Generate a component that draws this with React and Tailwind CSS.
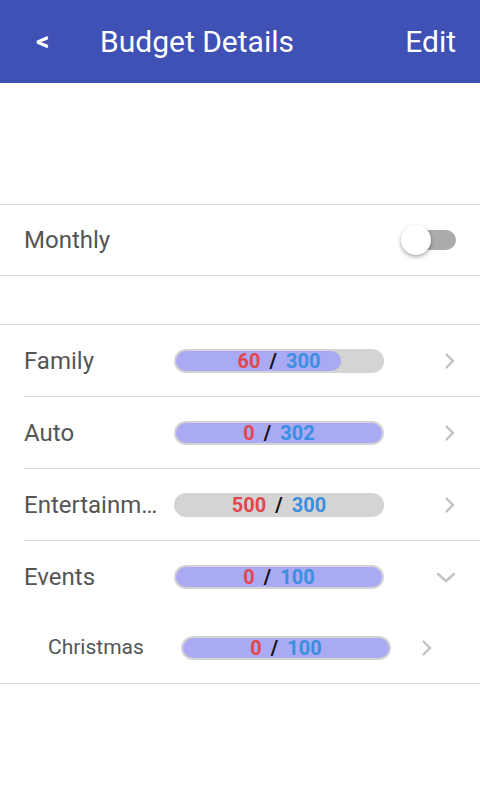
// App.jsx
const FONT = { fontFamily: "Roboto, 'Noto Sans', sans-serif" };

// ── Progress pill ─────────────────────────────────────────────
function Bar({ spent, total, fill }) {
  return (
    <div className="relative w-[210px] h-[24px] rounded-full bg-[#d4d4d4] p-[2px]">
      {fill > 0 && (
        <div className="h-full rounded-full bg-[#a9a9f4]" style={{ width: `${fill}%` }} />
      )}
      <div className="absolute inset-0 flex items-center justify-center gap-[9px] text-[20px] font-bold leading-none">
        <span className="text-[#e2474f]">{spent}</span>
        <span className="text-[#111]">/</span>
        <span className="text-[#3a8fe0]">{total}</span>
      </div>
    </div>
  );
}

function ChevronRight() {
  return (
    <svg width="12" height="18" viewBox="0 0 12 18" fill="none">
      <path d="M2.5 2.5 L9 9 L2.5 15.5" stroke="#c2c2c2" strokeWidth="2.4" strokeLinecap="round" strokeLinejoin="round" />
    </svg>
  );
}

function ChevronDown() {
  return (
    <svg width="20" height="11" viewBox="0 0 20 11" fill="none">
      <path d="M2 2 L10 9 L18 2" stroke="#c2c2c2" strokeWidth="2.4" strokeLinecap="round" strokeLinejoin="round" />
    </svg>
  );
}

function Row({ name, spent, total, fill, open, last }) {
  return (
    <div className={`ml-6 h-[72px] flex items-center ${last ? "" : "border-b border-[#dcdcdc]"}`}>
      <div className="w-[142px] mr-[8px] truncate text-2xl text-[#555]">{name}</div>
      <Bar spent={spent} total={total} fill={fill} />
      <div className="flex-1 flex justify-end pr-[24px]">
        {open ? <ChevronDown /> : <ChevronRight />}
      </div>
    </div>
  );
}

// ── App root ──────────────────────────────────────────────────
export default function App() {
  return (
    <div className="w-[480px] h-[800px] bg-white" style={FONT}>
      <header className="h-[83px] bg-[#3f51b5] flex items-center text-white">
        <span className="w-[100px] pl-[36px] text-[26px] font-bold">&lt;</span>
        <h1 className="flex-1 text-[30px] font-normal">Budget Details</h1>
        <span className="pr-[24px] text-[30px]">Edit</span>
      </header>

      <div className="h-[121px]" />

      <div className="h-[72px] border-y border-[#dcdcdc] flex items-center justify-between pl-6 pr-[24px]">
        <span className="text-2xl text-[#555]">Monthly</span>
        <div className="relative w-[52px] h-[20px] rounded-full bg-[#ababab]">
          <div className="absolute left-[-3px] top-[-5px] w-[30px] h-[30px] rounded-full bg-white shadow-[0_2px_4px_rgba(0,0,0,0.35)]" />
        </div>
      </div>

      <div className="h-[48px]" />

      <div className="border-y border-[#dcdcdc]">
        <Row name="Family" spent="60" total="300" fill={80} />
        <Row name="Auto" spent="0" total="302" fill={100} />
        <Row name="Entertainment" spent="500" total="300" fill={0} />
        <Row name="Events" spent="0" total="100" fill={100} open last />
        <div className="h-[70px] flex items-center">
          <div className="w-[181px] pl-12 text-[21px] text-[#555]">Christmas</div>
          <Bar spent="0" total="100" fill={100} />
          <div className="pl-[30px]"><ChevronRight /></div>
        </div>
      </div>
    </div>
  );
}
